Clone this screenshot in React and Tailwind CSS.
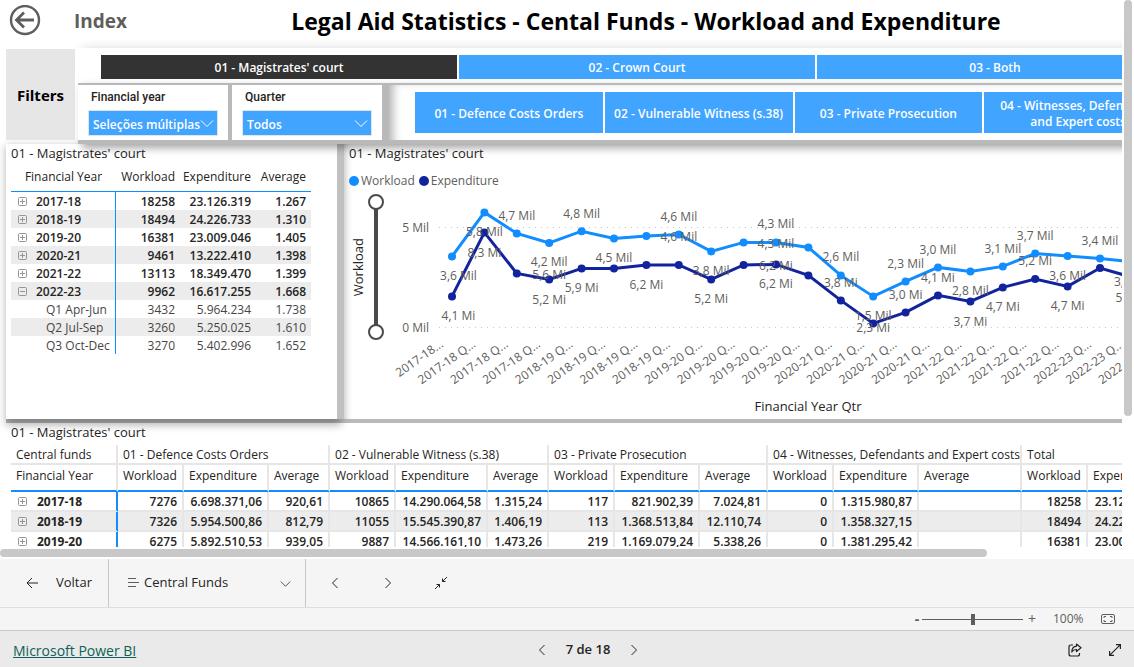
import React, { useState } from 'react';

const courts = ["01 - Magistrates' court", '02 - Crown Court', '03 - Both'];

const funds = [
  '01 - Defence Costs Orders',
  '02 - Vulnerable Witness (s.38)',
  '03 - Private Prosecution',
  '04 - Witnesses, Defendants and Expert costs',
];

const yearRows = [
  { label: '2017-18', values: ['18258', '23.126.319', '1.267'] },
  { label: '2018-19', values: ['18494', '24.226.733', '1.310'] },
  { label: '2019-20', values: ['16381', '23.009.046', '1.405'] },
  { label: '2020-21', values: ['9461', '13.222.410', '1.398'] },
  { label: '2021-22', values: ['13113', '18.349.470', '1.399'] },
  { label: '2022-23', values: ['9962', '16.617.255', '1.668'], open: true },
  { label: 'Q1 Apr-Jun', values: ['3432', '5.964.234', '1.738'], child: true },
  { label: 'Q2 Jul-Sep', values: ['3260', '5.250.025', '1.610'], child: true },
  { label: 'Q3 Oct-Dec', values: ['3270', '5.402.996', '1.652'], child: true },
];

const fundRows = [
  {
    label: '2017-18',
    values: ['7276', '6.698.371,06', '920,61', '10865', '14.290.064,58', '1.315,24', '117', '821.902,39', '7.024,81', '0', '1.315.980,87', '', '18258', '23.126.318,90', '1.266,64'],
  },
  {
    label: '2018-19',
    values: ['7326', '5.954.500,86', '812,79', '11055', '15.545.390,87', '1.406,19', '113', '1.368.513,84', '12.110,74', '0', '1.358.327,15', '', '18494', '24.226.732,72', '1.309,98'],
  },
  {
    label: '2019-20',
    values: ['6275', '5.892.510,53', '939,05', '9887', '14.566.161,10', '1.473,26', '219', '1.169.079,24', '5.338,26', '0', '1.381.295,42', '', '16381', '23.009.046,29', '1.404,62'],
  },
];

const workload = [3.58, 5.78, 4.73, 4.25, 4.84, 4.48, 4.6, 4.68, 3.83, 4.28, 4.28, 4.03, 2.63, 1.58, 2.33, 3.03, 2.83, 3.08, 3.73, 3.6, 3.48, 3.3, 3.27];
const expenditure = [1.58, 4.78, 2.73, 2.43, 2.98, 2.98, 3.15, 3.15, 2.43, 3.15, 3.18, 2.63, 1.38, 0.23, 0.78, 1.63, 1.33, 2.03, 2.45, 2.08, 3.0, 2.53, 2.6];

// [text, quarter index, baseline]
const dataLabels = [
  ['3,6 Mil', 0.2, 86], ['4,1 Mi', 0.2, 126], ['5,8 Mil', 1, 42], ['8,3 Mi', 1, 63],
  ['4,7 Mil', 2, 26], ['4,2 Mil', 3, 72], ['5,6 Mi', 3, 85], ['5,2 Mi', 3, 110],
  ['4,8 Mil', 4, 24], ['5,9 Mi', 4, 98], ['4,5 Mil', 5, 68], ['6,2 Mi', 6, 95],
  ['4,6 Mil', 7, 27], ['4,6 Mil', 7, 47], ['3,8 Mil', 8, 81], ['5,2 Mi', 8, 109],
  ['4,3 Mil', 10, 34], ['4,3 Mil', 10, 54], ['6,2 Mi', 10, 76], ['6,2 Mi', 10, 94],
  ['2,6 Mil', 12, 67], ['3,8 Mi', 12, 93], ['1,5 Mil', 13, 126], ['2,3 Mi', 13, 138],
  ['2,3 Mil', 14, 74], ['3,0 Mi', 14, 105], ['3,0 Mil', 15, 60], ['4,1 Mi', 15, 88],
  ['2,8 Mil', 16, 101], ['3,7 Mi', 16, 132], ['3,1 Mil', 17, 59], ['4,7 Mi', 17, 117],
  ['3,7 Mil', 18, 46], ['5,2 Mi', 18, 71], ['3,6 Mil', 19, 86], ['4,7 Mi', 19, 116],
  ['3,4 Mil', 20, 51], ['3,3 Mil', 21, 92], ['5,0 Mi', 21, 108],
];

const quarters = workload.map((v, i) => {
  const year = 17 + Math.floor(i / 4);
  return i === 0 ? '2017-18...' : `20${year}-${year + 1} Q...`;
});

const px = (i) => 58 + i * 32.4;
const py = (v) => 134 - v * 20;
const toPoints = (series) => series.map((v, i) => `${px(i)},${py(v)}`).join(' ');

const Chevron = ({ dir = 'down', className = '' }) => {
  const paths = {
    down: 'M1 4.5 L7 10.5 L13 4.5',
    left: 'M9.5 2 L4.5 7 L9.5 12',
    right: 'M4.5 2 L9.5 7 L4.5 12',
  };
  return (
    <svg viewBox="0 0 14 14" className={className} fill="none" stroke="currentColor">
      <path d={paths[dir]} />
    </svg>
  );
};

const ExpandButton = ({ open }) => (
  <button aria-label={open ? 'Collapse' : 'Expand'} className="flex size-[10px] text-[#979593]">
    <svg viewBox="0 0 10 10" className="size-[10px]" fill="none" stroke="currentColor">
      <rect x="1.5" y="0.5" width="8" height="8" rx="1" />
      <path d={open ? 'M3 4.5 H8' : 'M3 4.5 H8 M5.5 2 V7'} />
    </svg>
  </button>
);

const Slicer = ({ id, label, options }) => (
  <div className="w-[150px] bg-white px-[10px] pt-1">
    <label htmlFor={id} className="block pl-[3px] font-[Roboto] text-[12px] leading-[16px] font-medium text-[#252423]">
      {label}
    </label>
    <div className="relative mt-[5px]">
      <select
        id={id}
        className="block h-[26px] w-[130px] appearance-none border border-[#dfe6ee] bg-[#41a4ff] pt-[3px] pl-1 text-[12px] font-semibold text-white outline-none"
      >
        {options.map((o) => (
          <option key={o}>{o}</option>
        ))}
      </select>
      <Chevron className="pointer-events-none absolute top-[6px] right-1 size-[14px] text-white" />
    </div>
  </div>
);

const Header = () => (
  <header className="flex h-[42px] items-center">
    <button aria-label="Back" className="ml-[9px] text-[#605e5c]">
      <svg viewBox="0 0 32 32" className="size-8" fill="none" stroke="currentColor">
        <circle cx="16" cy="15" r="14" strokeWidth="2.4" />
        <path d="M25 15 H8 M15 7.500 L7.500 15 L15 22.500" strokeWidth="2.8" />
      </svg>
    </button>
    <a href="#index" className="ml-[33px] w-[98px] text-[19px] font-bold text-[#605e5c]">Index</a>
    <h1 className="w-[948px] text-center text-[23px] font-bold text-black">
      Legal Aid Statistics - Cental Funds - Workload and Expenditure
    </h1>
  </header>
);

const Filters = () => {
  const [court, setCourt] = useState(0);
  return (
    <section className="relative z-20 flex pl-[6px]">
      <div className="mt-px mb-1 flex w-[69px] items-center justify-center bg-[#e6e6e6] pt-[2px] text-[15px] font-bold text-black">
        Filters
      </div>
      <div className="flex-1 shadow-[4px_-4px_10px_-4px_rgba(0,0,0,0.15)]">
        <div className="flex gap-[2px] bg-white pt-[7px] pr-[107px] pb-1 pl-[26px]">
          {courts.map((c, i) => (
            <button
              key={c}
              onClick={() => setCourt(i)}
              className={`h-6 flex-1 pt-[2px] text-[12px] font-semibold text-white ${court === i ? 'bg-[#333333]' : 'bg-[#41a4ff]'}`}
            >
              {c}
            </button>
          ))}
        </div>
        <div className="ml-[3px] flex h-[61px] gap-1 bg-[#b9b9b9] pt-[2px] pb-1 shadow-[4px_4px_8px_0px_rgba(0,0,0,0.35)]">
          <Slicer id="year" label="Financial year" options={['Seleções múltiplas', '2017-18', '2018-19', '2019-20']} />
          <Slicer id="quarter" label="Quarter" options={['Todos', 'Q1 Apr-Jun', 'Q2 Jul-Sep', 'Q3 Oct-Dec']} />
          <div className="ml-[3px] flex flex-1 gap-[2px] bg-white py-[7px] pr-[108px] pl-[26px] shadow-[inset_10px_2px_10px_-6px_rgba(0,0,0,0.3)]">
            {funds.map((f) => (
              <button key={f} className="flex-1 basis-0 bg-[#41a4ff] px-2 pt-[2px] text-[12px] leading-[16px] font-semibold text-white">
                {f}
              </button>
            ))}
          </div>
        </div>
      </div>
    </section>
  );
};

const YearTable = () => (
  <div className="w-[331px] bg-white px-[5px] pt-px shadow-[2px_4px_8px_2px_rgba(0,0,0,0.3)]">
    <h2 className="text-[13px] leading-[16px] text-[#252423]">01 - Magistrates' court</h2>
    <table className="mt-1 w-[300px] table-fixed border-separate border-spacing-0 text-[12px] text-[#252423]">
      <colgroup>
        <col className="w-[105px]" />
        <col className="w-[64px]" />
        <col className="w-[76px]" />
        <col className="w-[55px]" />
      </colgroup>
      <thead>
        <tr className="h-[27px]">
          {['Financial Year', 'Workload', 'Expenditure', 'Average'].map((h, i) => (
            <th
              key={h}
              className={`border-b border-[#118dff] pt-0 pb-[3px] font-normal ${i === 0 ? 'text-center' : 'pr-[5px] text-right'}`}
            >
              {h}
            </th>
          ))}
        </tr>
      </thead>
      <tbody>
        {yearRows.map((r) => (
          <tr key={r.label} className={`h-[18px] leading-[16px] even:bg-[#ececec] ${r.child ? 'text-[#484644]' : 'font-semibold'}`}>
            <th className={`border-r border-[#118dff] p-0 pt-[2px] text-left ${r.child ? 'font-normal' : 'font-semibold'}`}>
              {r.child ? (
                <span className="pl-[35px]">{r.label}</span>
              ) : (
                <span className="flex items-center gap-[9px] pl-[6px]">
                  <ExpandButton open={r.open} />
                  {r.label}
                </span>
              )}
            </th>
            {r.values.map((v) => (
              <td key={v} className="p-0 pt-[2px] pr-[5px] text-right">{v}</td>
            ))}
          </tr>
        ))}
      </tbody>
    </table>
  </div>
);

const thumb =
  '[&::-webkit-slider-thumb]:pointer-events-auto [&::-webkit-slider-thumb]:size-4 [&::-webkit-slider-thumb]:appearance-none [&::-webkit-slider-thumb]:rounded-full [&::-webkit-slider-thumb]:border-2 [&::-webkit-slider-thumb]:border-[#4a4a4a] [&::-webkit-slider-thumb]:bg-white';

const AxisZoom = () => (
  <div className="relative flex h-[146px] w-4 justify-center">
    <div className="my-2 w-1 bg-[#4a4a4a]" />
    {[100, 0].map((v) => (
      <input
        key={v}
        type="range"
        defaultValue={v}
        aria-label={v ? 'Axis maximum' : 'Axis minimum'}
        className={`pointer-events-none absolute inset-0 h-[146px] w-4 appearance-none bg-transparent [direction:rtl] [writing-mode:vertical-lr] ${thumb}`}
      />
    ))}
  </div>
);

const TrendChart = () => (
  <div className="flex-1 overflow-hidden bg-white pt-px pl-[5px] shadow-[inset_8px_0_8px_-8px_rgba(0,0,0,0.35)]">
    <h2 className="text-[13px] leading-[16px] text-[#252423]">01 - Magistrates' court</h2>
    <div className="mt-3 flex items-center gap-1 text-[12px] leading-[16px] text-[#605e5c]">
      <span className="flex items-center gap-[2px]">
        <i className="size-[10px] rounded-full bg-[#118dff]" />
        Workload
      </span>
      <span className="flex items-center gap-[2px]">
        <i className="size-[10px] rounded-full bg-[#12239e]" />
        Expenditure
      </span>
    </div>
    <div className="mt-[5px] flex">
      <div className="flex h-[146px] w-[18px] items-center">
        <span className="rotate-180 text-[13px] leading-[18px] text-[#252423] [writing-mode:vertical-rl]">Workload</span>
      </div>
      <div className="ml-px">
        <AxisZoom />
      </div>
      <svg viewBox="0 0 780 224" className="ml-[10px] h-[224px] w-[780px] shrink-0 text-[12px]" fill="#605e5c">
        <g stroke="#c8c6c4" strokeDasharray="1 5">
          <path d="M45 33.5 H770" />
          <path d="M45 133.5 H770" />
        </g>
        <text x="35" y="38" textAnchor="end">5 Mil</text>
        <text x="35" y="138" textAnchor="end">0 Mil</text>
        <polyline points={toPoints(workload)} fill="none" stroke="#118dff" strokeWidth="3" />
        {workload.map((v, i) => (
          <circle key={i} cx={px(i)} cy={py(v)} r="4" fill="#118dff" />
        ))}
        <polyline points={toPoints(expenditure)} fill="none" stroke="#12239e" strokeWidth="3" />
        {expenditure.map((v, i) => (
          <circle key={i} cx={px(i)} cy={py(v)} r="4" fill="#12239e" />
        ))}
        {dataLabels.map(([text, i, y], n) => (
          <text key={n} x={px(i)} y={y} textAnchor="middle">{text}</text>
        ))}
        {quarters.map((q, i) => (
          <text key={i} textAnchor="end" transform={`translate(${px(i) - 8} 152) rotate(-35)`}>{q}</text>
        ))}
        <text x="414" y="217" textAnchor="middle" fill="#252423" className="text-[13px]">Financial Year Qtr</text>
      </svg>
    </div>
  </div>
);

const groups = [...funds, 'Total'];

const FundsMatrix = () => (
  <div className="flex-1 bg-white pt-px pl-[5px]">
    <h2 className="text-[13px] leading-[16px] text-[#252423]">01 - Magistrates' court</h2>
    <table className="mt-[5px] w-[1230px] table-fixed border-separate border-spacing-0 text-[12px] text-[#252423]">
      <colgroup>
        <col className="w-[107px]" />
        <col className="w-[66px]" />
        <col className="w-[85px]" />
        <col className="w-[61px]" />
        <col className="w-[66px]" />
        <col className="w-[92px]" />
        <col className="w-[61px]" />
        <col className="w-[66px]" />
        <col className="w-[85px]" />
        <col className="w-[68px]" />
        <col className="w-[66px]" />
        <col className="w-[85px]" />
        <col className="w-[103px]" />
        <col className="w-[66px]" />
        <col className="w-[92px]" />
        <col className="w-[61px]" />
      </colgroup>
      <thead>
        <tr className="h-5 text-left leading-[16px]">
          <th className="border-r-2 border-b-2 border-[#e6e6e6] pt-[2px] pr-0 pb-0 pl-[5px] font-normal">Central funds</th>
          {groups.map((g) => (
            <th key={g} colSpan={3} className="border-r-2 border-b-2 border-[#e6e6e6] pt-[2px] pr-0 pb-0 pl-[5px] font-normal whitespace-nowrap">
              {g}
            </th>
          ))}
        </tr>
        <tr className="h-[27px] text-left">
          <th className="border-r-2 border-b-2 border-r-[#e6e6e6] border-b-[#118dff] py-0 pr-0 pb-1 pl-[5px] font-normal">
            Financial Year
          </th>
          {groups.map((g) =>
            ['Workload', 'Expenditure', 'Average'].map((h) => (
              <th key={g + h} className="border-r-2 border-b-2 border-r-[#e6e6e6] border-b-[#118dff] py-0 pr-0 pb-1 pl-[5px] font-normal">
                {h}
              </th>
            ))
          )}
        </tr>
      </thead>
      <tbody>
        {fundRows.map((r) => (
          <tr key={r.label} className="h-5 leading-[16px] font-semibold even:bg-[#ececec]">
            <th className="border-r-2 border-b-2 border-r-[#118dff] border-b-[#e6e6e6] p-0 pt-[2px] text-left font-[inherit]">
              <span className="flex items-center gap-[10px] pl-[6px]">
                <ExpandButton />
                {r.label}
              </span>
            </th>
            {r.values.map((v, i) => (
              <td key={i} className="border-r-2 border-b-2 border-[#e6e6e6] p-0 pt-[2px] pr-[5px] text-right">{v}</td>
            ))}
          </tr>
        ))}
      </tbody>
    </table>
  </div>
);

const NavBar = () => (
  <nav className="flex h-[49px] items-stretch border-b border-[#dedede] text-[13px] text-[#252423]">
    <button className="flex w-[109px] items-center gap-[18px] border-r border-[#c8c8c8] pl-[26px]">
      <svg viewBox="0 0 12 12" className="size-3" fill="none" stroke="currentColor">
        <path d="M12 6 H1 M6 1 L1 6 L6 11" />
      </svg>
      Voltar
    </button>
    <div className="relative flex w-[197px] items-center border-r border-[#c8c8c8] pl-[18px]">
      <svg viewBox="0 0 12 10" className="h-[10px] w-3 text-[#605e5c]" stroke="currentColor">
        <path d="M1 0.500 H9 M1 4.500 H12 M1 8.500 H9" />
      </svg>
      <select aria-label="Page" className="ml-[5px] h-full flex-1 appearance-none bg-transparent text-[13px] outline-none">
        <option>Central Funds</option>
        <option>Index</option>
      </select>
      <Chevron className="pointer-events-none absolute right-[14px] size-[11px]" />
    </div>
    <button aria-label="Previous bookmark" className="flex w-[58px] items-center justify-center">
      <Chevron dir="left" className="size-[14px]" />
    </button>
    <button aria-label="Next bookmark" className="flex w-[48px] items-center justify-center">
      <Chevron dir="right" className="size-[14px]" />
    </button>
    <button aria-label="Minimize" className="flex w-[58px] items-center justify-center">
      <svg viewBox="0 0 12 12" className="size-3" fill="none" stroke="currentColor">
        <path d="M12 0 L7.500 4.500 M7.500 1.500 V4.500 H10.500 M0 12 L4.500 7.500 M1.500 7.500 H4.500 V10.500" />
      </svg>
    </button>
  </nav>
);

const ZoomBar = () => (
  <div className="flex h-[22px] items-center justify-end pr-[19px] text-[#605e5c]">
    <button aria-label="Zoom out" className="w-[10px] text-[14px] leading-[20px] font-bold">-</button>
    <input
      type="range"
      aria-label="Zoom"
      className="h-3 w-[101px] appearance-none bg-transparent bg-[linear-gradient(#605e5c,#605e5c)] bg-[length:100%_1px] bg-center bg-no-repeat [&::-webkit-slider-thumb]:h-[11px] [&::-webkit-slider-thumb]:w-1 [&::-webkit-slider-thumb]:appearance-none [&::-webkit-slider-thumb]:bg-[#605e5c]"
    />
    <button aria-label="Zoom in" className="ml-1 w-[10px] text-[14px] leading-[20px]">+</button>
    <span className="ml-4 w-[32px] text-[12px]">100%</span>
    <button aria-label="Fit to page" className="ml-4">
      <svg viewBox="0 0 14 12" className="h-3 w-[14px]" fill="none" stroke="currentColor">
        <rect x="0.5" y="1.5" width="13" height="9" rx="1.500" />
        <path d="M3 5 V3.500 H5 M9 3.500 H11 V5 M11 7 V8.500 H9 M5 8.500 H3 V7" />
      </svg>
    </button>
  </div>
);

const Footer = () => (
  <footer className="grid h-[37px] grid-cols-[1fr_auto_1fr] items-center border-t border-[#c8c8c8] bg-[#eaeaea] px-[13px] pt-[2px] text-[#252423]">
    <a href="#powerbi" className="text-[14px] text-[#0e6158] underline">Microsoft Power BI</a>
    <div className="flex items-center gap-[17px] pl-[42px]">
      <button aria-label="Previous page"><Chevron dir="left" className="size-[14px]" /></button>
      <span className="text-[13px] font-semibold">7 de 18</span>
      <button aria-label="Next page"><Chevron dir="right" className="size-[14px]" /></button>
    </div>
    <div className="flex items-center justify-end gap-[27px]">
      <button aria-label="Share">
        <svg viewBox="0 0 14 14" className="size-[14px]" fill="none" stroke="currentColor" strokeWidth="1.2" strokeLinejoin="round">
          <path d="M5 2 H3 Q1 2 1 4 V11 Q1 13 3 13 H9.500 Q11.500 13 11.500 11 V10" />
          <path d="M8.500 1 L13 4.800 L8.500 8.500 V6.500 Q5.500 6.300 3.800 9 Q4 3.500 8.500 3.200 Z" />
        </svg>
      </button>
      <button aria-label="Full screen">
        <svg viewBox="0 0 12 12" className="size-3" fill="none" stroke="currentColor" strokeWidth="1.2">
          <path d="M0.600 11.400 L11.400 0.600 M7 0.600 H11.400 V5 M0.600 7 V11.400 H5" />
        </svg>
      </button>
    </div>
  </footer>
);

export default function App() {
  return (
    <div className="flex h-screen flex-col bg-[#f5f5f5] font-['Open_Sans','Noto_Sans',sans-serif]">
      <div className="flex min-h-0 flex-1 bg-white">
        <main className="min-w-0 flex-1 overflow-hidden">
          <div className="w-[1280px]">
            <Header />
            <div className="pt-[6px]">
              <Filters />
            </div>
            <div className="ml-[6px]">
              <div className="relative z-10 flex h-[275px]">
                <YearTable />
                <div className="flex flex-1 bg-[#c0c0c0] pl-[7px]">
                  <TrendChart />
                </div>
              </div>
              <div className="flex bg-[#b9b9b9] pt-1">
                <FundsMatrix />
              </div>
            </div>
          </div>
        </main>
        <div className="w-3 pl-[2px]">
          <div className="h-[76%] w-2 rounded-full bg-[#c8c8c8]" />
        </div>
      </div>
      <div className="bg-white pt-[2px] pb-[2px]">
        <div className="h-2 w-[87%] rounded-full bg-[#c8c8c8]" />
      </div>
      <NavBar />
      <ZoomBar />
      <Footer />
    </div>
  );
}
